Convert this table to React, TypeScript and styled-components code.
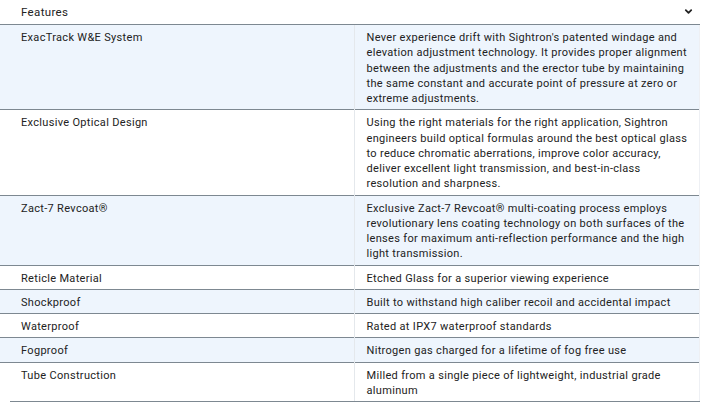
import React from 'react'
import styled, { createGlobalStyle } from 'styled-components'

const GlobalStyle = createGlobalStyle`
  html, body {
    margin: 0;
    padding: 0;
    background: #ffffff;
  }
  body {
    font-family: Roboto, 'Liberation Sans', Arial, sans-serif;
    color: #222222;
  }
`

type Feature = {
  name: string
  description: string
}

const FEATURES: Feature[] = [
  {
    name: 'ExacTrack W&E System',
    description:
      "Never experience drift with Sightron's patented windage and elevation adjustment technology. It provides proper alignment between the adjustments and the erector tube by maintaining the same constant and accurate point of pressure at zero or extreme adjustments.",
  },
  {
    name: 'Exclusive Optical Design',
    description:
      'Using the right materials for the right application, Sightron engineers build optical formulas around the best optical glass to reduce chromatic aberrations, improve color accuracy, deliver excellent light transmission, and best-in-class resolution and sharpness.',
  },
  {
    name: 'Zact-7 Revcoat®',
    description:
      'Exclusive Zact-7 Revcoat® multi-coating process employs revolutionary lens coating technology on both surfaces of the lenses for maximum anti-reflection performance and the high light transmission.',
  },
  { name: 'Reticle Material', description: 'Etched Glass for a superior viewing experience' },
  { name: 'Shockproof', description: 'Built to withstand high caliber recoil and accidental impact' },
  { name: 'Waterproof', description: 'Rated at IPX7 waterproof standards' },
  { name: 'Fogproof', description: 'Nitrogen gas charged for a lifetime of fog free use' },
  {
    name: 'Tube Construction',
    description: 'Milled from a single piece of lightweight, industrial grade aluminum',
  },
]

const StyledSection = styled.section`
  width: 700px;
`

const StyledHeader = styled.button`
  width: 100%;
  height: 25px;
  display: flex;
  align-items: center;
  justify-content: space-between;
  padding: 0 7px 1px 21px;
  background: white;
  border: none;
  border-bottom: 1px solid #7d8891;
  font-family: inherit;
  font-size: 11.5px;
  letter-spacing: 0.35px;
  color: #222;
  cursor: pointer;
  box-sizing: border-box;
  svg {
    width: 9px;
    height: 9px;
  }
`

const StyledTable = styled.table`
  width: 100%;
  border-collapse: collapse;
  table-layout: fixed;
  font-size: 11px;
  line-height: 15.25px;
  letter-spacing: 0.32px;
`

const StyledRow = styled.tr<{ $striped: boolean; $last: boolean }>`
  background: ${(p) => (p.$striped ? '#eef5fd' : '#ffffff')};
  border-bottom: ${(p) => (p.$last ? 'none' : '1px solid #7d8891')};
`

const StyledName = styled.td`
  width: 354px;
  padding: 5px 12px 3px 21px;
  vertical-align: top;
  box-sizing: border-box;
  border-right: 1px solid #e4e8ec;
`

const StyledDesc = styled.td`
  padding: 5px 9px 3px 12px;
  vertical-align: top;
  border-right: 1px solid #eef0f4;
`

const StyledFooterLine = styled.div`
  margin-left: 10px;
  height: 1px;
  background: #7d8891;
`

const Chevron = () => (
  <svg viewBox="0 0 10 10" fill="none" stroke="#222" strokeWidth="2" strokeLinecap="round" strokeLinejoin="round">
    <path d="M2 3.5 L5 6.5 L8 3.5" />
  </svg>
)

export default function App() {
  return (
    <>
      <GlobalStyle />
      <StyledSection>
        <StyledHeader type="button">
          <span>Features</span>
          <Chevron />
        </StyledHeader>
        <StyledTable>
          <tbody>
            {FEATURES.map((f, i) => (
              <StyledRow key={f.name} $striped={i % 2 === 0} $last={i === FEATURES.length - 1}>
                <StyledName>{f.name}</StyledName>
                <StyledDesc>{f.description}</StyledDesc>
              </StyledRow>
            ))}
          </tbody>
        </StyledTable>
        <StyledFooterLine />
      </StyledSection>
    </>
  )
}
